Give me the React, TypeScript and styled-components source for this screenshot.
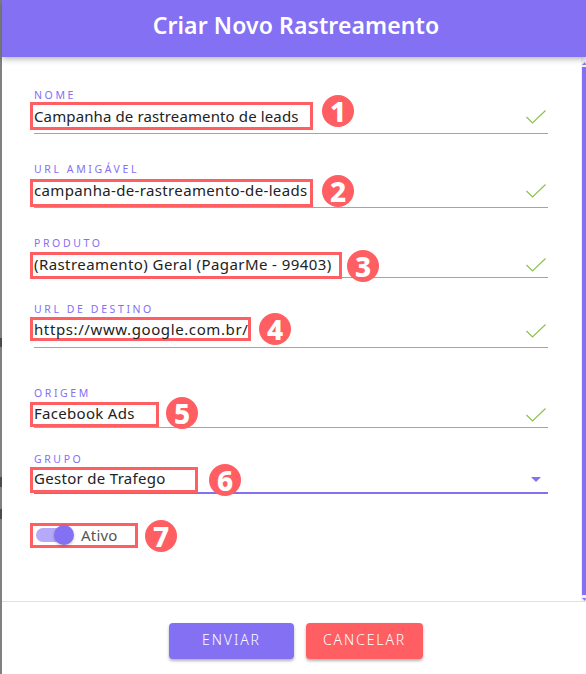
import React from 'react';
import styled, { createGlobalStyle } from 'styled-components';

const PURPLE = '#8470f3';
const RED = '#ff5e62';
const GREEN = '#8bc34a';
const FONT = '"Noto Sans", "Open Sans", sans-serif';

const GlobalStyle = createGlobalStyle`
  html, body {
    margin: 0;
    padding: 0;
    background: #fff;
    overflow: hidden;
  }
`;

const Page = styled.div`
  display: flex;
  width: 586px;
  height: 674px;
  font-family: ${FONT};
`;

const Backdrop = styled.div`
  flex: 0 0 2px;
  background: #808080;
`;

// bits of the page text behind the dialog that stick out at the left edge
const BackdropMark = styled.div<{ $top: number; $height: number }>`
  width: 1.5px;
  height: ${(p) => p.$height}px;
  margin-top: ${(p) => p.$top}px;
  background: #4a4a4f;
`;

const Dialog = styled.div`
  flex: 1;
  display: flex;
  flex-direction: column;
  min-width: 0;
`;

const Header = styled.header`
  position: relative;
  z-index: 2;
  flex: 0 0 57px;
  box-sizing: border-box;
  display: flex;
  align-items: center;
  justify-content: center;
  padding: 0 0 8px 4px;
  background: ${PURPLE};
  box-shadow: 0 2px 6px rgba(0, 0, 0, 0.3);
  color: #fff;
  font-size: 23px;
  font-weight: 600;
  letter-spacing: 0.1px;
`;

const Body = styled.div`
  flex: 0 0 544px;
  display: flex;
  border-bottom: 1px solid #e0e0e0;
`;

const Form = styled.form`
  flex: 1;
  padding: 32px 33px 0 32px;
`;

const FieldBox = styled.div<{ $gap: number }>`
  margin-top: ${(p) => p.$gap}px;
`;

const Label = styled.div`
  height: 12px;
  line-height: 12px;
  font-size: 10.5px;
  font-weight: 400;
  letter-spacing: 2.6px;
  color: ${PURPLE};
  white-space: nowrap;
`;

const Row = styled.div<{ $height: number; $focused?: boolean }>`
  display: flex;
  align-items: flex-start;
  box-sizing: border-box;
  height: ${(p) => p.$height}px;
  border-bottom: ${(p) => (p.$focused ? `2px solid ${PURPLE}` : `1px solid ${GREEN}`)};
`;

const Highlight = styled.div<{
  $width: number;
  $height: number;
  $top: number;
  $lift?: number;
  $spacing?: number;
}>`
  flex: 0 0 auto;
  box-sizing: border-box;
  display: flex;
  align-items: center;
  width: ${(p) => p.$width}px;
  height: ${(p) => p.$height}px;
  margin: ${(p) => p.$top}px 0 0 -4px;
  padding: 0 0 ${(p) => p.$lift ?? 0}px 1px;
  border: 3px solid ${RED};
  font-size: 15px;
  letter-spacing: ${(p) => p.$spacing ?? 0}px;
  color: #222;
  white-space: nowrap;
`;

const Badge = styled.div<{ $gap: number; $top: number }>`
  position: relative;
  z-index: 1;
  flex: 0 0 32px;
  display: flex;
  align-items: center;
  justify-content: center;
  height: 32px;
  margin: ${(p) => p.$top}px 0 0 ${(p) => p.$gap}px;
  border-radius: 50%;
  background: ${RED};
  color: #fff;
  font-size: 28px;
  font-weight: 800;
  line-height: 1;
`;

const Check = styled.svg<{ $top: number }>`
  flex: 0 0 20px;
  width: 20px;
  height: 14px;
  margin: ${(p) => p.$top}px 2px 0 auto;
  fill: none;
  stroke: ${GREEN};
  stroke-width: 1.2;
`;

const Caret = styled.div`
  width: 0;
  height: 0;
  margin: 12px 7px 0 auto;
  border-left: 5px solid transparent;
  border-right: 5px solid transparent;
  border-top: 5px solid ${PURPLE};
`;

const Track = styled.div`
  position: relative;
  flex: 0 0 34px;
  height: 14px;
  margin-left: 2px;
  border-radius: 7px;
  background: #b5a9f9;
`;

const Thumb = styled.div`
  position: absolute;
  top: -3px;
  right: -4px;
  width: 20px;
  height: 20px;
  border-radius: 50%;
  background: ${PURPLE};
  box-shadow: 0 1px 3px rgba(0, 0, 0, 0.25);
`;

const SwitchLabel = styled.span`
  margin-left: 11px;
  color: #555;
  letter-spacing: 0.2px;
`;

const SwitchRow = styled.div`
  display: flex;
  align-items: flex-start;
`;

const Scrollbar = styled.div`
  flex: 0 0 5px;
  display: flex;
  flex-direction: column;
  align-items: flex-end;
  background: #f1f1f1;
`;

const ScrollArrow = styled.div<{ $up?: boolean }>`
  width: 0;
  height: 0;
  margin: ${(p) => (p.$up ? '5px 0 2px' : '3px 0 0')};
  border-left: 3px solid transparent;
  border-right: 1px solid transparent;
  ${(p) =>
    p.$up ? `border-bottom: 3px solid ${PURPLE};` : `border-top: 3px solid ${PURPLE};`}
`;

const ScrollThumb = styled.div`
  flex: 1;
  width: 4px;
  background: ${PURPLE};
`;

const Footer = styled.footer`
  flex: 1;
  display: flex;
  justify-content: center;
  gap: 12px;
  padding: 21px 0 0 4px;
`;

const Button = styled.button<{ $color: string; $width: number }>`
  width: ${(p) => p.$width}px;
  height: 36px;
  padding: 0 0 3px;
  border: 0;
  border-radius: 4px;
  background: ${(p) => p.$color};
  box-shadow: 0 2px 3px rgba(0, 0, 0, 0.3);
  color: #fff;
  font-family: ${FONT};
  font-size: 14px;
  font-weight: 300;
  letter-spacing: 1.9px;
`;

type FieldData = {
  label: string;
  value: string;
  spacing: number;
  lift: number;
  gap: number;
  rowHeight: number;
  boxWidth: number;
  boxHeight: number;
  boxTop: number;
  badgeGap: number;
  badgeTop: number;
};

const fields: FieldData[] = [
  { label: 'NOME', value: 'Campanha de rastreamento de leads', spacing: 0.12, lift: 0, gap: 0, rowHeight: 33, boxWidth: 283, boxHeight: 28, boxTop: 1, badgeGap: 9, badgeTop: -6 },
  { label: 'URL AMIGÁVEL', value: 'campanha-de-rastreamento-de-leads', spacing: 0.35, lift: 6, gap: 29, rowHeight: 33, boxWidth: 283, boxHeight: 28, boxTop: 4, badgeGap: 9, badgeTop: 0 },
  { label: 'PRODUTO', value: '(Rastreamento) Geral (PagarMe - 99403)', spacing: 0.42, lift: 4, gap: 29, rowHeight: 29, boxWidth: 312, boxHeight: 27, boxTop: 3, badgeGap: 5, badgeTop: 1 },
  { label: 'URL DE DESTINO', value: 'https://www.google.com.br/', spacing: 0.6, lift: 0, gap: 25, rowHeight: 33, boxWidth: 221, boxHeight: 24, boxTop: 2, badgeGap: 8, badgeTop: -2 },
  { label: 'ORIGEM', value: 'Facebook Ads', spacing: 0.3, lift: 4, gap: 39, rowHeight: 29, boxWidth: 129, boxHeight: 25, boxTop: 3, badgeGap: 7, badgeTop: -2 },
];

export default function App() {
  return (
    <Page>
      <GlobalStyle />
      <Backdrop>
        <BackdropMark $top={338} $height={9} />
        <BackdropMark $top={130} $height={10} />
        <BackdropMark $top={22} $height={10} />
      </Backdrop>
      <Dialog>
        <Header>Criar Novo Rastreamento</Header>
        <Body>
          <Form>
            {fields.map((f, i) => (
              <FieldBox key={f.label} $gap={f.gap}>
                <Label>{f.label}</Label>
                <Row $height={f.rowHeight}>
                  <Highlight
                    $width={f.boxWidth}
                    $height={f.boxHeight}
                    $top={f.boxTop}
                    $lift={f.lift}
                    $spacing={f.spacing}
                  >
                    {f.value}
                  </Highlight>
                  <Badge $gap={f.badgeGap} $top={f.badgeTop}>
                    {i + 1}
                  </Badge>
                  <Check $top={9} viewBox="0 0 20 14">
                    <polyline points="0.5,7 6.5,13 19.5,0.5" />
                  </Check>
                </Row>
              </FieldBox>
            ))}
            <FieldBox $gap={25}>
              <Label>GRUPO</Label>
              <Row $height={29} $focused>
                <Highlight $width={168} $height={26} $top={2} $lift={4} $spacing={0.3}>
                  Gestor de Trafego
                </Highlight>
                <Badge $gap={11} $top={-1}>
                  6
                </Badge>
                <Caret />
              </Row>
            </FieldBox>
            <SwitchRow>
              <Highlight $width={108} $height={25} $top={29} $lift={2}>
                <Track>
                  <Thumb />
                </Track>
                <SwitchLabel>Ativo</SwitchLabel>
              </Highlight>
              <Badge $gap={7} $top={26}>
                7
              </Badge>
            </SwitchRow>
          </Form>
          <Scrollbar>
            <ScrollArrow $up />
            <ScrollThumb />
            <ScrollArrow />
          </Scrollbar>
        </Body>
        <Footer>
          <Button type="button" $color={PURPLE} $width={125}>
            ENVIAR
          </Button>
          <Button type="button" $color={RED} $width={117}>
            CANCELAR
          </Button>
        </Footer>
      </Dialog>
    </Page>
  );
}
